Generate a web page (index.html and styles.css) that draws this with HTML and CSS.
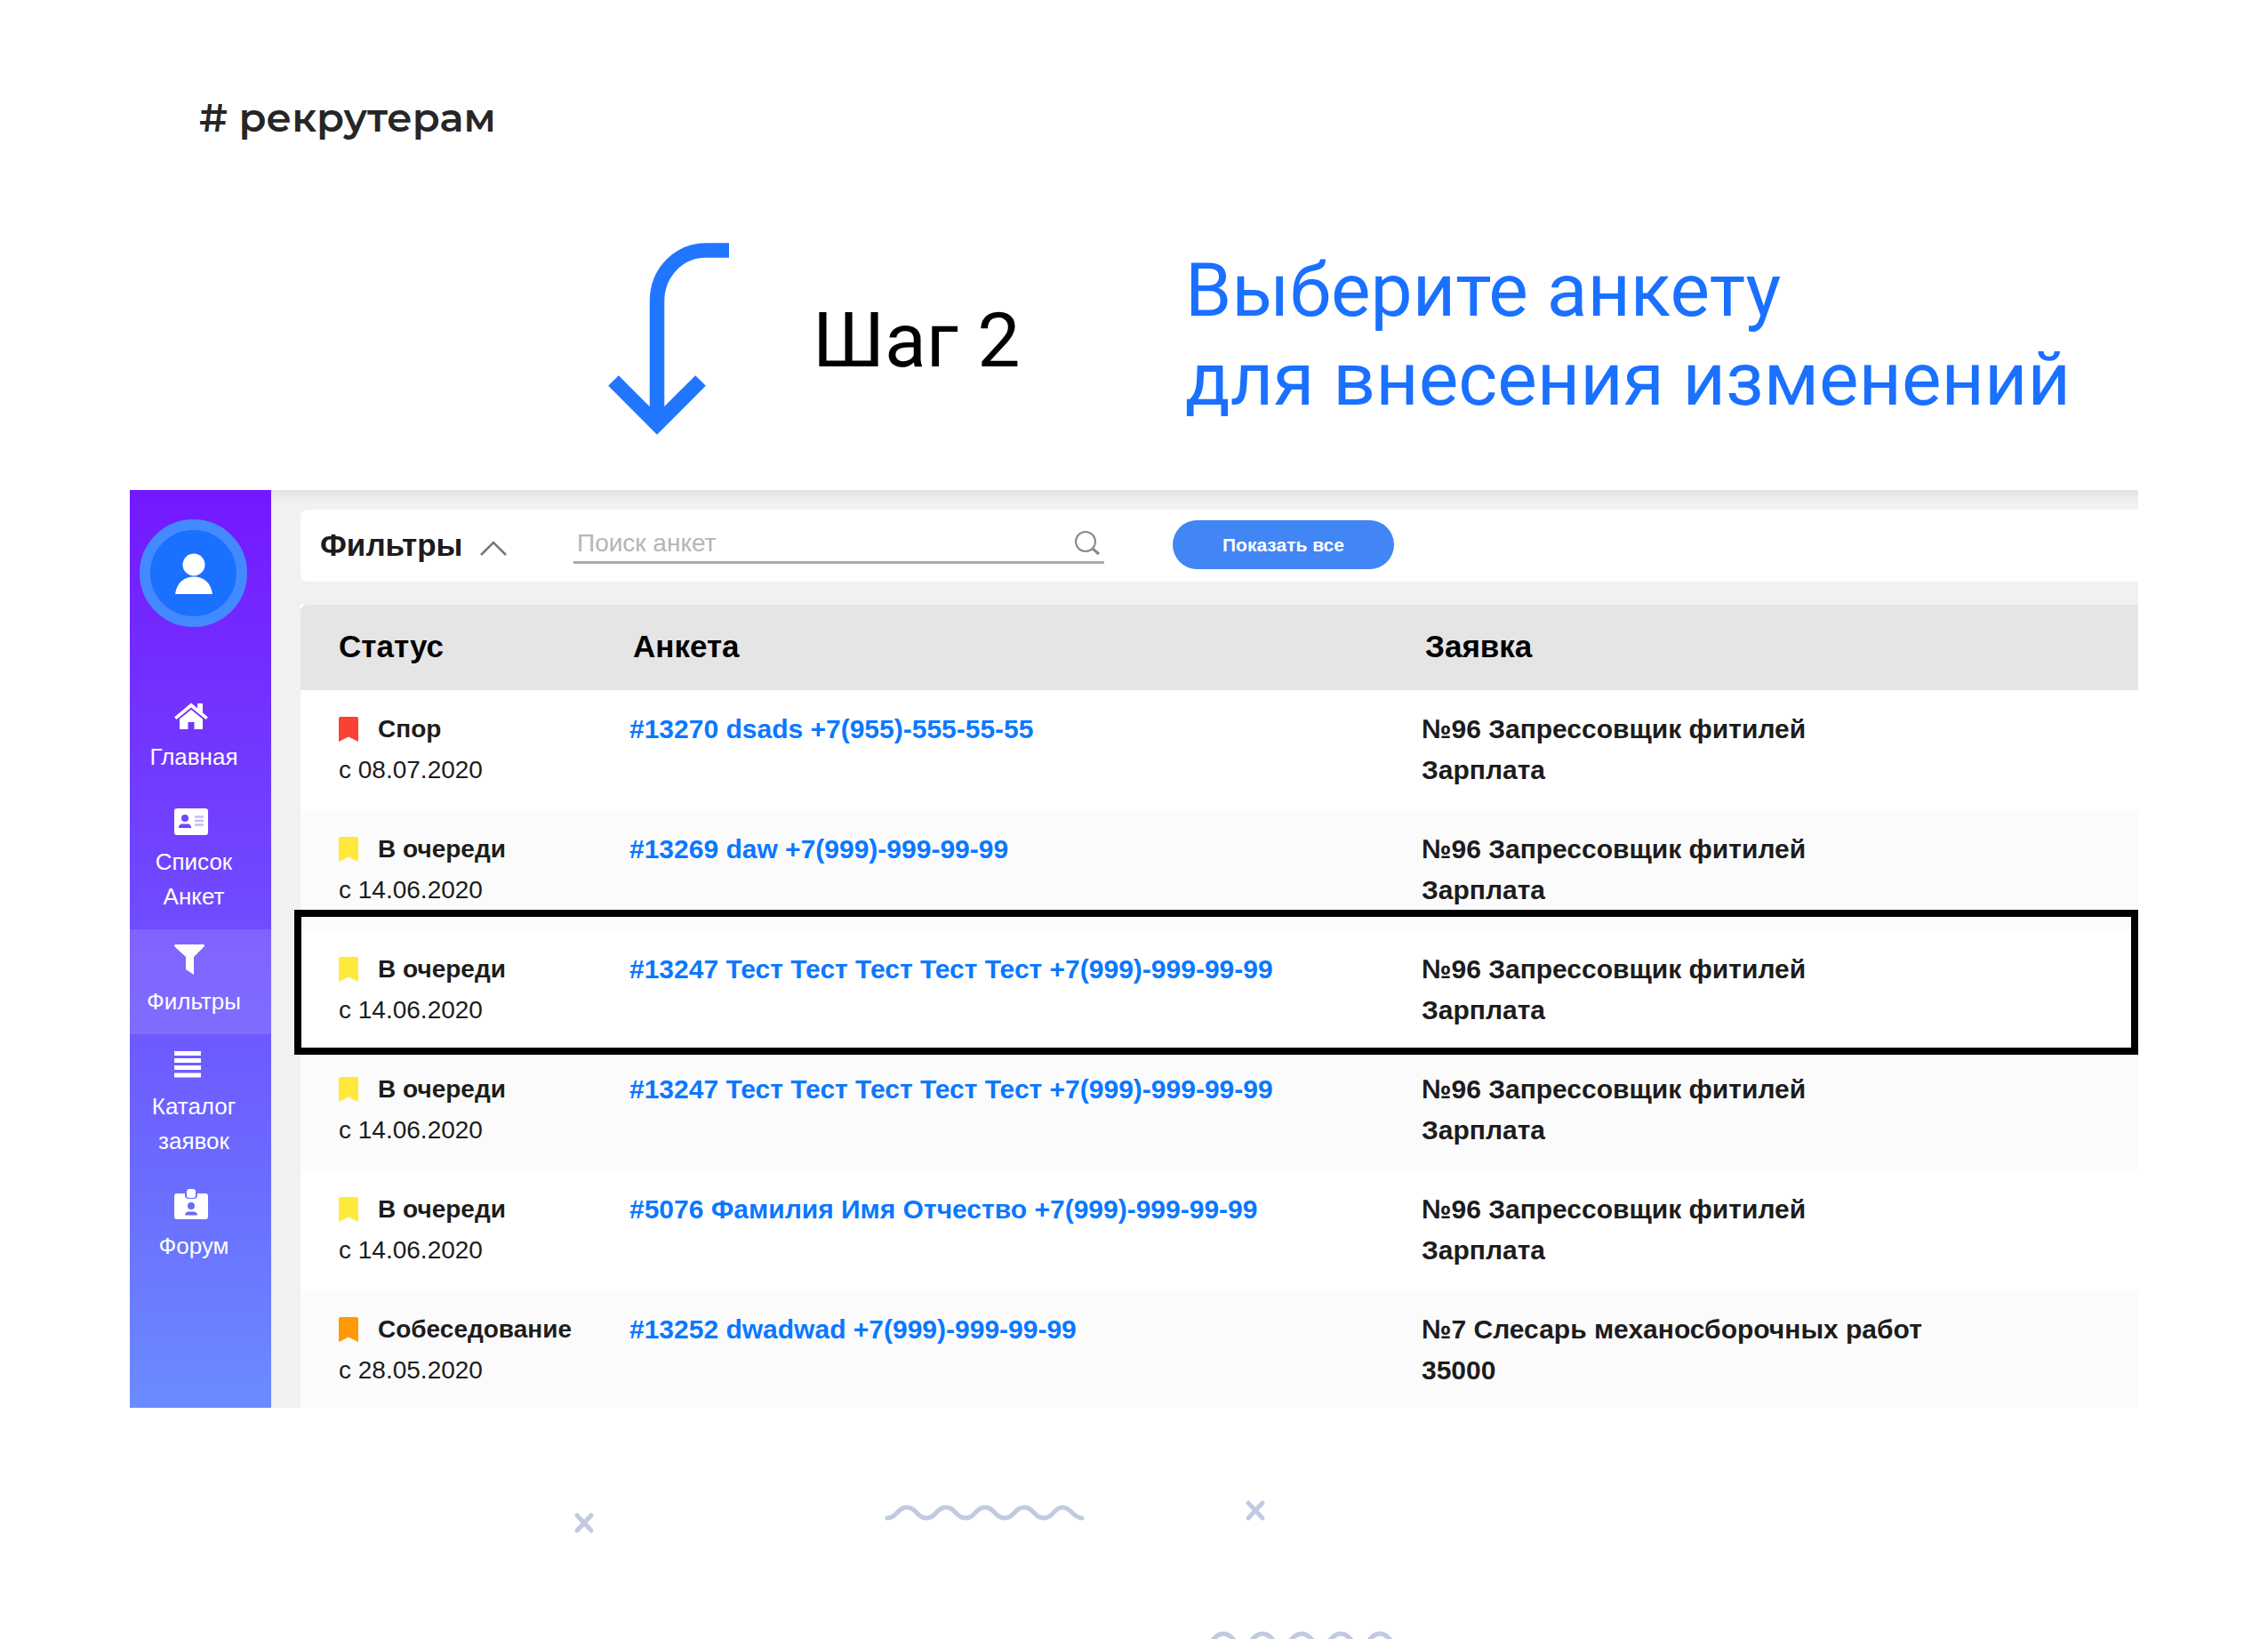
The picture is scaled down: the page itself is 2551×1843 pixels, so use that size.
FILE: index.html
```html
<!DOCTYPE html>
<html lang="ru">
<head>
<meta charset="utf-8">
<title>Рекрутерам — шаг 2</title>
<link rel="stylesheet" href="styles.css">
</head>
<body>
<svg class="sprite" aria-hidden="true">
  <symbol id="bookmark" viewBox="0 0 22 28"><path d="M2 0H20Q22 0 22 2V28L11 22.500L0 28V2Q0 0 2 0Z" fill="currentColor"/></symbol>
</svg>
<div class="slide">
  <p class="tag"># рекрутерам</p>

  <header class="intro">
    <svg class="arrow" viewBox="0 0 138 216" aria-hidden="true">
      <path d="M137 8.500H111C81 8.500 56 33 56 66V200" fill="none" stroke="#2176ff" stroke-width="16.500"/>
      <path d="M7 155L56 204L105 155" fill="none" stroke="#2176ff" stroke-width="16.500"/>
    </svg>
    <p class="step">Шаг 2</p>
    <h1 class="title">Выберите анкету<br>для внесения изменений</h1>
  </header>

  <section class="app">
    <nav class="sidebar">
      <a class="avatar" href="#profile" aria-label="Профиль">
        <svg viewBox="0 0 42 46" aria-hidden="true"><circle cx="21" cy="13" r="12.500" fill="#fff"/><path d="M0 46C2 33 10 26.500 21 26.500S40 33 42 46Z" fill="#fff"/></svg>
      </a>
      <a class="item" href="#home">
        <svg viewBox="0 0 38 34" aria-hidden="true"><path d="M19 3.500L26 9.500V4H32V14.500L38 19.500L35.500 22L19 8.500L2.500 22L0 19.500Z" fill="#fff"/><path d="M19 11L32 21.500V33H22.500V25H15.500V33H6V21.500Z" fill="#fff"/></svg>
        <span>Главная</span>
      </a>
      <a class="item" href="#list">
        <svg viewBox="0 0 38 34" aria-hidden="true"><rect y="4" width="38" height="30" rx="3" fill="#fff"/><circle cx="12" cy="15" r="4" fill="#6f45ff"/><path d="M5 26C5 22.500 7 21.500 9 21.500H15C17 21.500 19 22.500 19 26Z" fill="#6f45ff"/><path d="M23 13.500H33M23 18H33M23 22.500H33" stroke="#c9b8ff" stroke-width="2.500"/></svg>
        <span>Список<br>Анкет</span>
      </a>
      <a class="item active" href="#filters">
        <svg viewBox="0 0 38 34" aria-hidden="true"><path d="M1 0H33Q35 1 33 3L22 14V34L13 28V14L1 3Q-1 1 1 0Z" fill="#fff"/></svg>
        <span>Фильтры</span>
      </a>
      <a class="item" href="#catalog">
        <svg viewBox="0 0 38 34" aria-hidden="true"><path d="M0 4.500H30M0 12.500H30M0 20.500H30M0 29H30" stroke="#fff" stroke-width="5"/></svg>
        <span>Каталог<br>заявок</span>
      </a>
      <a class="item" href="#forum">
        <svg viewBox="0 0 38 34" aria-hidden="true"><path d="M3 5H12V8Q13 11 15 11H23Q25 11 26 8V5H35Q38 5 38 8V31Q38 34 35 34H3Q0 34 0 31V8Q0 5 3 5Z" fill="#fff"/><rect x="14" y="0" width="10" height="10" rx="3" fill="#fff"/><circle cx="19" cy="19" r="4" fill="#6a6aff"/><path d="M12 29.500C12 27 14 25.500 16 25.500H22C24 25.500 26 27 26 29.500Z" fill="#6a6aff"/></svg>
        <span>Форум</span>
      </a>
    </nav>

    <main class="main">
      <form class="filters">
        <button class="toggle" type="button">Фильтры
          <svg viewBox="0 0 30 18" aria-hidden="true"><path d="M1 17L15 3L29 17" fill="none" stroke="#777" stroke-width="2.500"/></svg>
        </button>
        <label class="search">
          <input type="text" placeholder="Поиск анкет" aria-label="Поиск анкет">
          <svg viewBox="0 0 30 28" aria-hidden="true"><circle cx="13" cy="12" r="11" fill="none" stroke="#888" stroke-width="2"/><path d="M21 20L28 26" stroke="#888" stroke-width="3"/></svg>
        </label>
        <button class="show-all" type="button">Показать все</button>
      </form>

      <table class="list">
        <colgroup><col class="col-status"><col class="col-form"><col></colgroup>
        <thead><tr><th>Статус</th><th>Анкета</th><th>Заявка</th></tr></thead>
        <tbody>
          <tr>
            <td><span class="status"><svg class="mark red"><use href="#bookmark"/></svg>Спор</span><span class="date">с 08.07.2020</span></td>
            <td><a href="#13270">#13270 dsads +7(955)-555-55-55</a></td>
            <td>№96 Запрессовщик фитилей<br>Зарплата</td>
          </tr>
          <tr>
            <td><span class="status"><svg class="mark yellow"><use href="#bookmark"/></svg>В очереди</span><span class="date">с 14.06.2020</span></td>
            <td><a href="#13269">#13269 daw +7(999)-999-99-99</a></td>
            <td>№96 Запрессовщик фитилей<br>Зарплата</td>
          </tr>
          <tr class="selected">
            <td><span class="status"><svg class="mark yellow"><use href="#bookmark"/></svg>В очереди</span><span class="date">с 14.06.2020</span></td>
            <td><a href="#13247">#13247 Тест Тест Тест Тест Тест +7(999)-999-99-99</a></td>
            <td>№96 Запрессовщик фитилей<br>Зарплата</td>
          </tr>
          <tr>
            <td><span class="status"><svg class="mark yellow"><use href="#bookmark"/></svg>В очереди</span><span class="date">с 14.06.2020</span></td>
            <td><a href="#13247">#13247 Тест Тест Тест Тест Тест +7(999)-999-99-99</a></td>
            <td>№96 Запрессовщик фитилей<br>Зарплата</td>
          </tr>
          <tr>
            <td><span class="status"><svg class="mark yellow"><use href="#bookmark"/></svg>В очереди</span><span class="date">с 14.06.2020</span></td>
            <td><a href="#5076">#5076 Фамилия Имя Отчество +7(999)-999-99-99</a></td>
            <td>№96 Запрессовщик фитилей<br>Зарплата</td>
          </tr>
          <tr>
            <td><span class="status"><svg class="mark orange"><use href="#bookmark"/></svg>Собеседование</span><span class="date">с 28.05.2020</span></td>
            <td><a href="#13252">#13252 dwadwad +7(999)-999-99-99</a></td>
            <td>№7 Слесарь механосборочных работ<br>35000</td>
          </tr>
        </tbody>
      </table>
    </main>
  </section>

  <svg class="decor" viewBox="0 0 2551 260" aria-hidden="true">
    <g fill="none" stroke="#c2cae0" stroke-width="5" stroke-linecap="round">
      <path d="M649 121L665 138M665 121L649 138"/>
      <path d="M1404 107L1420 124M1420 107L1404 124"/>
      <path d="M998 124C1009 124 1009 112 1020 112S1031 124 1042 124S1053 112 1064 112S1075 124 1086 124S1097 112 1108 112S1119 124 1130 124S1141 112 1152 112S1163 124 1174 124S1185 112 1195 112S1207 124 1217 124"/>
      <path d="M1354 266C1365 266 1365 254 1376 254S1387 266 1398 266S1409 254 1420 254S1431 266 1442 266S1453 254 1464 254S1475 266 1486 266S1497 254 1508 254S1519 266 1530 266S1541 254 1552 254S1563 266 1574 266"/>
    </g>
  </svg>
</div>
</body>
</html>
```
FILE: styles.css
```css
* { box-sizing: border-box; }

body {
  margin: 0;
  background: #fff;
  color: #1c1c1c;
  font-family: "Liberation Sans", Arial, sans-serif;
}

svg { display: block; }
.sprite { display: none; }
a { text-decoration: none; }

.slide {
  min-height: 100vh;
  overflow: hidden;
}

.tag {
  margin: 0;
  padding: 102px 224px 0;
  color: #262626;
  font: 600 45px/60px Montserrat, Inter, sans-serif;
}

.intro {
  display: flex;
  align-items: flex-start;
  height: 389px;
  padding: 111px 146px 0 683px;
  font-family: Roboto, sans-serif;
}
.arrow { flex: none; width: 138px; height: 216px; }
.step {
  flex: none;
  width: 422px;
  margin: 0;
  padding: 60px 0 0 93px;
  color: #000;
  font-size: 86px;
  line-height: 100px;
}
.title {
  margin: 0;
  padding: 4px 0 0 90px;
  color: #1a70ff;
  font-size: 84px;
  font-weight: 400;
  line-height: 100px;
  white-space: nowrap;
}

.app {
  display: flex;
  margin: 0 146px;
}

.sidebar {
  flex: none;
  width: 159px;
  padding-top: 33px;
  background: linear-gradient(#7418ff, #704dff 48%, #6b69ff 73%, #6a8cff);
}
.avatar {
  display: flex;
  align-items: center;
  justify-content: center;
  width: 121px;
  height: 121px;
  margin: 0 0 65px 11px;
  border: 12px solid #438aff;
  border-radius: 50%;
  background: #1a70ff;
}
.avatar svg { width: 42px; height: 46px; }
.item {
  display: block;
  padding: 17px 15px 17px 0;
  color: #fff;
  font-size: 26px;
  line-height: 39px;
  text-align: center;
}
.item svg {
  width: 38px;
  height: 34px;
  margin: 0 0 11px 50px;
}
.item span { display: block; }
.active { background: rgba(255, 255, 255, 0.12); }

.main {
  flex: 1;
  min-width: 0;
  padding: 22px 0 0 33px;
  background: linear-gradient(#e4e4e4, #f1f1f1 16px);
}

.filters {
  display: flex;
  align-items: center;
  height: 81px;
  margin-bottom: 26px;
  padding: 0 0 2px 22px;
  border-radius: 8px 0 0 8px;
  background: #fff;
}
button {
  border: 0;
  font-family: inherit;
  cursor: pointer;
}
.toggle {
  display: flex;
  align-items: center;
  gap: 20px;
  width: 285px;
  padding: 0;
  background: none;
  color: #1c1c1c;
  font-size: 35px;
  font-weight: 700;
  line-height: 40px;
}
.toggle svg { width: 30px; height: 18px; margin-top: 6px; }
.search {
  display: flex;
  align-items: center;
  width: 597px;
  height: 42px;
  margin-right: 77px;
  padding: 0 4px;
  border-bottom: 3px solid #aaa;
}
.search input {
  flex: 1;
  min-width: 0;
  padding: 0;
  border: 0;
  outline: 0;
  background: none;
  font: 28px/36px "Liberation Sans", Arial, sans-serif;
}
.search input::placeholder { color: #b5b5b5; }
.search svg { width: 30px; height: 28px; }
.show-all {
  width: 249px;
  height: 55px;
  border-radius: 28px;
  background: #4285f4;
  color: #fff;
  font-size: 21px;
  font-weight: 700;
}

.list {
  width: 100%;
  border-collapse: separate;
  border-spacing: 0;
  table-layout: fixed;
  background: #fff;
}
.col-status { width: 370px; }
.col-form { width: 891px; }
th {
  height: 96px;
  padding: 0 0 2px 4px;
  background: #e5e5e5;
  color: #000;
  font-size: 35px;
  text-align: left;
}
th:first-child { border-top-left-radius: 8px; }
td {
  padding: 21px 0 22px;
  font-size: 30px;
  font-weight: 700;
  line-height: 46px;
  vertical-align: top;
  white-space: nowrap;
}
th:first-child, td:first-child { padding-left: 43px; }
td:first-child { font-size: 28px; }
td a { color: #0a78ff; }
tbody tr:nth-child(even) { background: #fbfbfb; }
tbody tr:last-child td { padding-bottom: 19px; }

.status { display: flex; align-items: center; }
.mark { width: 22px; height: 28px; margin-right: 22px; }
.red { color: #f94135; }
.yellow { color: #ffea3b; }
.orange { color: #ff9905; }
.date { display: block; font-weight: 400; }

/* Frame drawn over the row and its neighbours */
.selected { position: relative; }
.selected td:last-child::after {
  content: "";
  position: absolute;
  inset: -23px 0 -5px -7px;
  border: 8px solid #000;
  pointer-events: none;
}

.decor { width: 100%; }
```
